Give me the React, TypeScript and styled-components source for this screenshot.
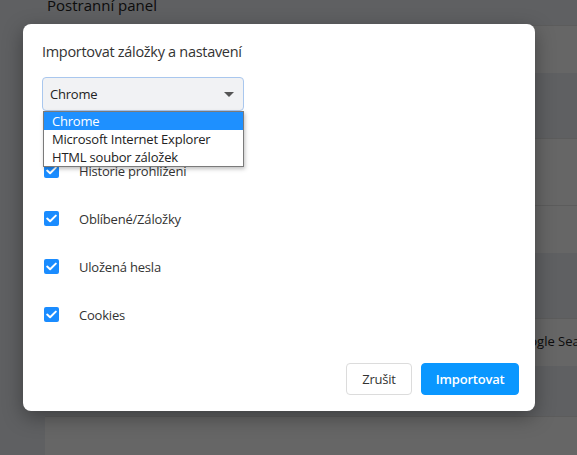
import styled, { createGlobalStyle } from "styled-components";

const GlobalStyle = createGlobalStyle`
    html, body {
        margin: 0;
        padding: 0;
        width: 577px;
        height: 455px;
        overflow: hidden;
        font-family: "Open Sans", "Noto Sans", sans-serif;
        background: #eef0f4;
    }
`;

const font = `"Open Sans", "Noto Sans", sans-serif`;

const Page = styled.div`
    width: 577px;
    height: 455px;
    position: relative;
    overflow: hidden;
    background: #eef0f4;
`;

const Settings = styled.div`
    display: flex;
    flex-direction: column;
    padding: 0 0 0 45px;
`;

const SectionTitle = styled.div`
    font-size: 15px;
    color: #222;
    padding: 0 0 0 2px;
    height: 27px;
    line-height: 14px;
    margin-top: -2px;
`;

const Card = styled.div<{ gap?: number }>`
    background: #fff;
    margin-bottom: ${(p) => p.gap ?? 0}px;
    display: flex;
    flex-direction: column;
`;

const CardRow = styled.div<{ h: number }>`
    height: ${(p) => p.h}px;
    border-top: 1px solid #e6e6e6;
    display: flex;
    align-items: center;
    padding-left: 467px;
    padding-bottom: 3px;
    font-size: 13px;
    color: #222;
    box-sizing: border-box;
    white-space: nowrap;
`;

const Overlay = styled.div`
    position: absolute;
    inset: 0;
    background: rgba(0, 0, 0, 0.6);
    display: flex;
    align-items: flex-start;
    padding: 24px 0 0 23px;
`;

const Dialog = styled.div`
    width: 512px;
    height: 387px;
    background: #fff;
    border-radius: 8px;
    box-shadow: 0 6px 20px rgba(0, 0, 0, 0.35);
    box-sizing: border-box;
    padding: 18px 16px 16px 19px;
    display: flex;
    flex-direction: column;
    font-family: ${font};
`;

const Title = styled.div`
    font-size: 14.5px;
    color: #333;
    letter-spacing: -0.3px;
    line-height: 20px;
`;

const SelectWrap = styled.div`
    position: relative;
    margin-top: 15px;
    width: 202px;
    z-index: 2;
`;

const SelectBox = styled.div`
    height: 34px;
    box-sizing: border-box;
    border: 1px solid #a9c7ee;
    border-radius: 4px;
    background: #f1f2f4;
    display: flex;
    align-items: center;
    justify-content: space-between;
    padding: 0 7px 0 7px;
    font-size: 13px;
    color: #222;
    letter-spacing: -0.2px;
`;

const Caret = styled.span`
    width: 0;
    height: 0;
    border-left: 5px solid transparent;
    border-right: 5px solid transparent;
    border-top: 5px solid #555;
    margin-right: 2px;
`;

const OptionList = styled.div`
    position: absolute;
    top: 34px;
    left: 1px;
    width: 199px;
    background: #fff;
    border: 1px solid #7a7a7a;
    box-shadow: 1px 2px 4px rgba(0, 0, 0, 0.25);
`;

const Option = styled.div<{ active?: boolean }>`
    height: 18px;
    line-height: 18px;
    font-size: 13px;
    padding-left: 8px;
    letter-spacing: -0.2px;
    color: ${(p) => (p.active ? "#fff" : "#222")};
    background: ${(p) => (p.active ? "#1e90ff" : "#fff")};
`;

const Checks = styled.div`
    display: flex;
    flex-direction: column;
    gap: 33px;
    margin-top: 52px;
    padding-left: 2px;
`;

const CheckRow = styled.label`
    display: flex;
    align-items: center;
    gap: 20px;
    height: 15px;
    font-size: 13px;
    color: #333;
    letter-spacing: -0.2px;
`;

const Box = styled.span`
    width: 15px;
    height: 15px;
    border-radius: 2px;
    background: #1a8cff;
    display: flex;
    align-items: center;
    justify-content: center;
    flex-shrink: 0;
`;

const Footer = styled.div`
    margin-top: auto;
    display: flex;
    justify-content: flex-end;
    gap: 9px;
`;

const Button = styled.button<{ primary?: boolean }>`
    height: 32px;
    border-radius: 4px;
    font-family: ${font};
    font-size: 13px;
    letter-spacing: -0.2px;
    padding: 0 ${(p) => (p.primary ? 13.5 : 15.5)}px;
    cursor: pointer;
    border: 1px solid ${(p) => (p.primary ? "#0a97ff" : "#dcdcdc")};
    background: ${(p) => (p.primary ? "#0a97ff" : "#fff")};
    color: ${(p) => (p.primary ? "#fff" : "#333")};
    font-weight: ${(p) => (p.primary ? 600 : 400)};
`;

function Check() {
    return (
        <Box>
            <svg width="11" height="9" viewBox="0 0 11 9">
                <path d="M1.2 4.6 L4.1 7.3 L9.8 1.6" fill="none" stroke="#fff" strokeWidth="2" strokeLinecap="round" strokeLinejoin="round" />
            </svg>
        </Box>
    );
}

const items = ["Historie prohlížení", "Oblíbené/Záložky", "Uložená hesla", "Cookies"];

export default function App() {
    return (
        <Page>
            <GlobalStyle />
            <Settings>
                <SectionTitle>Postranní panel</SectionTitle>
                <Card gap={65}>
                    <CardRow h={48} />
                </Card>
                <Card gap={65}>
                    <CardRow h={67} />
                    <CardRow h={48} />
                </Card>
                <Card gap={50}>
                    <CardRow h={48}>Google Search</CardRow>
                </Card>
                <Card>
                    <CardRow h={48} />
                </Card>
            </Settings>
            <Overlay>
                <Dialog>
                    <Title>Importovat záložky a nastavení</Title>
                    <SelectWrap>
                        <SelectBox>
                            <span>Chrome</span>
                            <Caret />
                        </SelectBox>
                        <OptionList>
                            <Option active>Chrome</Option>
                            <Option>Microsoft Internet Explorer</Option>
                            <Option>HTML soubor záložek</Option>
                        </OptionList>
                    </SelectWrap>
                    <Checks>
                        {items.map((t) => (
                            <CheckRow key={t}>
                                <Check />
                                {t}
                            </CheckRow>
                        ))}
                    </Checks>
                    <Footer>
                        <Button>Zrušit</Button>
                        <Button primary>Importovat</Button>
                    </Footer>
                </Dialog>
            </Overlay>
        </Page>
    );
}
